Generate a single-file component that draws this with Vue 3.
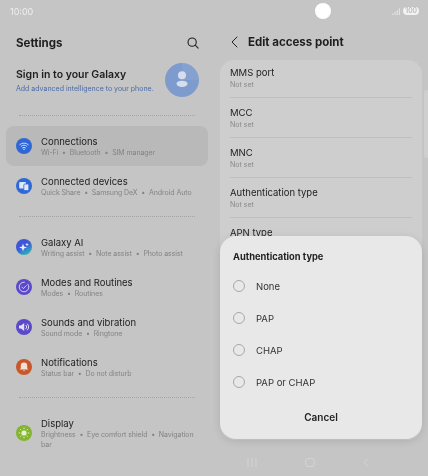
<template>
  <div class="screen">
    <div class="status-bar">
      <span class="clock">10:00</span>
      <span class="camera"></span>
      <div class="status-right">
        <svg width="8" height="7" viewBox="0 0 8 7"><path d="M.7 5.500v1.500M3 4v3M5.200 2.200V7M7.300.3V7" stroke="#e8e8e8" stroke-width="1" fill="none"/></svg>
        <span class="battery">100</span>
      </div>
    </div>

    <div class="columns">
      <section class="left">
        <header class="left-head">
          <h1>Settings</h1>
          <svg width="12" height="12" viewBox="0 0 14 14" fill="none" stroke="#222" stroke-width="1.300"><circle cx="6" cy="6" r="4.800"/><path d="M9.600 9.600 13 13" stroke-linecap="round"/></svg>
        </header>

        <div class="account">
          <div class="account-text">
            <div class="account-title">Sign in to your Galaxy</div>
            <div class="account-sub">Add advanced intelligence to your phone.</div>
          </div>
          <div class="avatar">
            <svg width="34" height="34" viewBox="0 0 34 34" fill="#d6deee"><circle cx="17" cy="12.300" r="4"/><ellipse cx="17" cy="20.800" rx="5.500" ry="3.100"/></svg>
          </div>
        </div>

        <template v-for="(group, g) in groups" :key="g">
          <div class="dots"></div>
          <div class="group">
            <div v-for="item in group" :key="item.title" class="row" :class="{ active: item.active }">
              <span class="icon" :style="{ background: item.color }">
                <svg width="16" height="16" viewBox="0 0 16 16" v-html="item.svg"></svg>
              </span>
              <div class="row-text">
                <div class="row-title">{{ item.title }}</div>
                <div class="row-sub">{{ item.sub }}</div>
              </div>
            </div>
          </div>
        </template>
      </section>

      <section class="right">
        <header class="right-head">
          <svg width="7" height="12" viewBox="0 0 7 12" fill="none" stroke="#222" stroke-width="1"><path d="M6 1 1 6l5 5" stroke-linecap="round" stroke-linejoin="round"/></svg>
          <h1>Edit access point</h1>
        </header>
        <div class="panel">
          <div class="field-list">
            <div v-for="f in fields" :key="f" class="field">
              <div class="field-title">{{ f }}</div>
              <div class="field-sub">Not set</div>
            </div>
          </div>
        </div>
      </section>
    </div>

    <div class="scroll-thumb"></div>

    <div class="dialog">
      <div class="dialog-title">Authentication type</div>
      <div class="options">
        <div v-for="o in options" :key="o" class="option">
          <span class="radio"></span>
          <span>{{ o }}</span>
        </div>
      </div>
      <div class="cancel">Cancel</div>
    </div>

    <nav class="nav">
      <svg width="10" height="9" viewBox="0 0 10 9" stroke="#d4d4d4" stroke-width="1"><path d="M1 0v9M5 0v9M9 0v9"/></svg>
      <svg width="10" height="9" viewBox="0 0 10 9" fill="none" stroke="#d4d4d4" stroke-width="1"><rect x=".7" y=".5" width="8.600" height="8" rx="2.400"/></svg>
      <svg width="6" height="9" viewBox="0 0 6 9" fill="none" stroke="#d4d4d4" stroke-width="1"><path d="M5.500.3 1 4.500l4.500 4.200"/></svg>
    </nav>
  </div>
</template>

<script setup>
const w = 'fill="none" stroke="#c9d8f5" stroke-width="1" stroke-linecap="round"'

const groups = [
  [
    {
      title: 'Connections', sub: 'Wi-Fi  •  Bluetooth  •  SIM manager', color: '#2f68d6', active: true,
      svg: `<path d="M3.800 6.600a6.200 6.200 0 0 1 8.400 0M5.200 8.200a4 4 0 0 1 5.600 0M6.600 9.800a2 2 0 0 1 2.800 0" ${w}/><circle cx="8" cy="11.300" r=".8" fill="#c9d8f5"/>`
    },
    {
      title: 'Connected devices', sub: 'Quick Share  •  Samsung DeX  •  Android Auto', color: '#2f68d6',
      svg: `<rect x="3.200" y="4" width="6.800" height="6.600" rx="1" fill="#dfe7fa"/><rect x="7.800" y="6" width="5" height="6.600" rx="1" fill="#dfe7fa" stroke="#2f68d6" stroke-width=".8"/>`
    }
  ],
  [
    {
      title: 'Galaxy AI', sub: 'Writing assist  •  Note assist  •  Photo assist', color: 'linear-gradient(150deg, #3f55d8 45%, #2c9fc0 75%, #4fc08a)',
      svg: `<path d="M7 4.500 8 7.500 11 8.500 8 9.500 7 12.500 6 9.500 3 8.500 6 7.500Z" fill="#eef"/><path d="M11 3.500 11.500 5 13 5.500 11.500 6 11 7.500 10.500 6 9 5.500 10.500 5Z" fill="#eef"/>`
    },
    {
      title: 'Modes and Routines', sub: 'Modes  •  Routines', color: '#5a49c8',
      svg: `<circle cx="8" cy="8" r="4.800" fill="none" stroke="#d5d0f2" stroke-width="1" stroke-dasharray="23 3"/><path d="M5.800 8 7.400 9.600 10.300 6.600" fill="none" stroke="#d5d0f2" stroke-width="1" stroke-linecap="round"/>`
    },
    {
      title: 'Sounds and vibration', sub: 'Sound mode  •  Ringtone', color: '#5a49c8',
      svg: `<path d="M3 6.500h2L8.200 4v8L5 9.500H3Z" fill="#e2dff6"/><path d="M10 6.200a2.500 2.500 0 0 1 0 3.600M11.500 5a4.300 4.300 0 0 1 0 6" fill="none" stroke="#e2dff6" stroke-width="1" stroke-linecap="round"/>`
    },
    {
      title: 'Notifications', sub: 'Status bar  •  Do not disturb', color: '#c9572a',
      svg: `<path d="M8 3.500a3.200 3.200 0 0 1 3.200 3.200v2.500l1 1.300H3.800l1-1.300V6.700A3.200 3.200 0 0 1 8 3.500Z" fill="#f5e0d6"/><path d="M6.800 11.500a1.300 1.300 0 0 0 2.400 0Z" fill="#f5e0d6"/>`
    }
  ],
  [
    {
      title: 'Display', sub: 'Brightness  •  Eye comfort shield  •  Navigation bar', color: '#84b52e',
      svg: `<circle cx="8" cy="8" r="2.600" fill="#e6f1cf"/><path d="M8 2.800v1.400M8 11.800v1.400M2.800 8h1.400M11.800 8h1.400M4.300 4.300l1 1M10.700 10.700l1 1M4.300 11.700l1-1M10.700 5.300l1-1" stroke="#e6f1cf" stroke-width="1" fill="none"/>`
    }
  ]
]

const fields = ['MMS port', 'MCC', 'MNC', 'Authentication type', 'APN type']
const options = ['None', 'PAP', 'CHAP', 'PAP or CHAP']
</script>

<style>
html, body { margin: 0; background: #c5c5c5; }
</style>

<style scoped>
.screen {
  position: relative;
  width: 428px;
  height: 476px;
  overflow: hidden;
  background: #c5c5c5;
  font-family: "Inter", "Liberation Sans", sans-serif;
  color: #1e1e1e;
  filter: blur(0.3px);
}

.status-bar {
  height: 22px;
  padding: 0 9px 0 10px;
  display: flex;
  align-items: center;
  justify-content: space-between;
  color: #efefef;
}
.clock { font-size: 9px; }
.camera {
  position: absolute;
  left: 315px;
  top: 3px;
  width: 16px;
  height: 16px;
  border-radius: 50%;
  background: #fff;
}
.status-right { display: flex; align-items: center; gap: 3px; }
.battery {
  background: #f2f2f2;
  color: #a8a8a8;
  border-radius: 5px;
  font-size: 7px;
  line-height: 8px;
  padding: 0 2px;
}

.columns { display: flex; }
.left { width: 214px; padding: 0 6px; box-sizing: border-box; }
.left-head {
  height: 40px;
  padding: 1px 9px 0 10px;
  box-sizing: border-box;
  display: flex;
  align-items: center;
  justify-content: space-between;
}
h1 { margin: 0; font-size: 11.500px; font-weight: 700; }

.account {
  height: 53px;
  padding: 0 9px 18px 10px;
  box-sizing: border-box;
  display: flex;
  align-items: center;
  justify-content: space-between;
}
.account-text { padding-top: 2px; }
.account-title { font-size: 10.500px; font-weight: 600; }
.account-sub { margin-top: 3px; font-size: 7px; color: #4a6aa8; }
.avatar {
  width: 34px;
  height: 34px;
  border-radius: 50%;
  background: conic-gradient(#84a1d0 0 90deg, #7d9bcd 90deg 360deg);
}
.avatar svg { display: block; }

.dots {
  margin: 0 13px;
  border-top: 1px dotted #a5a5a5;
}
.group { padding: 10px 0; }
.row {
  padding: 8.500px 10px;
  display: flex;
  align-items: center;
  gap: 9px;
  border-radius: 8px;
}
.row.active { background: #b9b9b9; }
.icon {
  flex: none;
  width: 16px;
  height: 16px;
  border-radius: 50%;
  display: block;
}
.icon svg { display: block; }
.row-title { font-size: 9.500px; line-height: 13px; color: #222; }
.row-sub { font-size: 7px; line-height: 10px; color: #838383; letter-spacing: -0.07px; white-space: pre-wrap; }

.right { width: 214px; padding: 0 6px; box-sizing: border-box; }
.right-head {
  height: 38px;
  padding: 2px 10px 0 11px;
  box-sizing: border-box;
  display: flex;
  align-items: center;
  gap: 10px;
}
.panel {
  background: #cecece;
  border-radius: 14px;
  height: 380px;
  padding: 0 10px;
  overflow: hidden;
}
.field-list { margin-top: -2px; }
.field {
  height: 40px;
  box-sizing: border-box;
  border-bottom: 1px solid #bfbfbf;
  display: flex;
  flex-direction: column;
  justify-content: center;
}
.field-title { font-size: 9.500px; line-height: 13px; color: #222; }
.field-sub { font-size: 7px; line-height: 11px; color: #8a8a8a; }

.scroll-thumb {
  position: absolute;
  right: 0;
  top: 90px;
  width: 4px;
  height: 68px;
  background: #cfcfcf;
  border-radius: 3px 0 0 3px;
}

.dialog {
  position: absolute;
  left: 220px;
  top: 236px;
  width: 202px;
  height: 203px;
  box-sizing: border-box;
  padding: 14px 13px 0;
  background: #e8e8e8;
  border-radius: 16px;
  box-shadow: 0 2px 8px rgba(0, 0, 0, 0.12);
}
.dialog-title { font-size: 9.300px; line-height: 13px; font-weight: 700; color: #222; }
.options { margin-top: 7px; }
.option {
  height: 32px;
  display: flex;
  align-items: center;
  gap: 11px;
  font-size: 9.500px;
  color: #333;
}
.radio {
  width: 10px;
  height: 10px;
  border: 1px solid #a8a8a8;
  border-radius: 50%;
}
.cancel {
  margin-top: 13px;
  text-align: center;
  font-size: 10px;
  font-weight: 600;
  color: #222;
}

.nav {
  position: absolute;
  left: 247px;
  top: 458px;
  width: 122px;
  display: flex;
  align-items: center;
  justify-content: space-between;
}
.nav svg { display: block; }
</style>
